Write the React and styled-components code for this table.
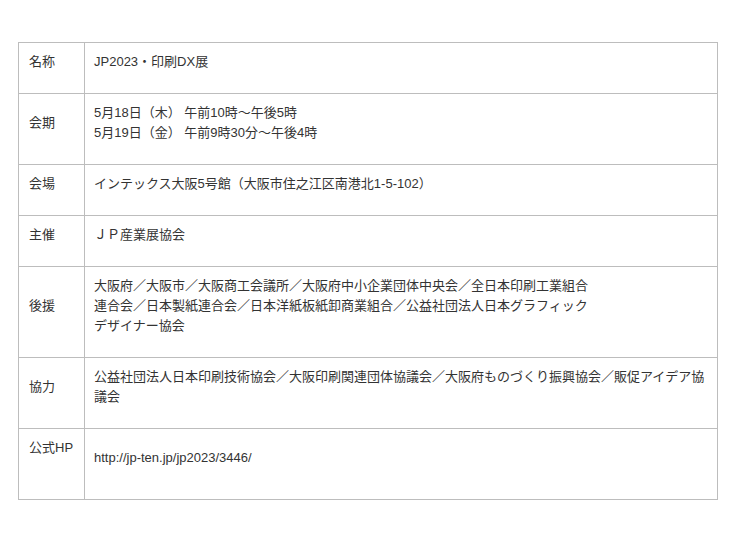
import React from "react";
import styled, { createGlobalStyle } from "styled-components";

const Global = createGlobalStyle`
  html, body { margin: 0; padding: 0; background: #fff; }
  body {
    font-family: "Liberation Sans", "Noto Sans CJK JP", sans-serif;
    color: #333;
  }
`;

const Page = styled.div`
  padding: 42px 0 0 18px;
`;

const Table = styled.div`
  width: 700px;
  box-sizing: border-box;
  display: grid;
  grid-template-columns: 66px 633px;
  border-top: 1px solid #bdbdbd;
  border-left: 1px solid #bdbdbd;
  font-size: 13px;
  line-height: 20px;
`;

const Cell = styled.div`
  box-sizing: border-box;
  border-right: 1px solid #bdbdbd;
  border-bottom: 1px solid #bdbdbd;
  padding: 9px 10px 21px;
  display: flex;
  flex-direction: column;
`;

const Label = styled(Cell)`
  padding-left: 10px;
  justify-content: ${(p) => (p.$top ? "flex-start" : "center")};
  white-space: nowrap;
`;

const Value = styled(Cell)`
  padding-left: 9px;
  padding-right: 6px;
  justify-content: center;
  white-space: nowrap;
  min-height: ${(p) => (p.$lines ? 9 + 21 + 1 + p.$lines * 20 : 0)}px;
`;

const rows = [
  { label: "名称", lines: ["JP2023・印刷DX展"] },
  {
    label: "会期",
    lines: ["5月18日（木） 午前10時～午後5時", "5月19日（金） 午前9時30分～午後4時"],
  },
  { label: "会場", lines: ["インテックス大阪5号館（大阪市住之江区南港北1-5-102）"] },
  { label: "主催", lines: ["ＪＰ産業展協会"] },
  {
    label: "後援",
    lines: [
      "大阪府／大阪市／大阪商工会議所／大阪府中小企業団体中央会／全日本印刷工業組合",
      "連合会／日本製紙連合会／日本洋紙板紙卸商業組合／公益社団法人日本グラフィック",
      "デザイナー協会",
    ],
  },
  {
    label: "協力",
    lines: [
      "公益社団法人日本印刷技術協会／大阪印刷関連団体協議会／大阪府ものづくり振興協会／販促アイデア協",
      "議会",
    ],
  },
  { label: "公式HP", lines: ["http://jp-ten.jp/jp2023/3446/"], top: true, minLines: 2 },
];

export default function App() {
  return (
    <>
      <Global />
      <Page>
        <Table>
          {rows.map((r) => (
            <React.Fragment key={r.label}>
              <Label $top={r.top}>{r.label}</Label>
              <Value $lines={r.minLines}>
                {r.lines.map((l, i) => (
                  <div key={i}>{l}</div>
                ))}
              </Value>
            </React.Fragment>
          ))}
        </Table>
      </Page>
    </>
  );
}
